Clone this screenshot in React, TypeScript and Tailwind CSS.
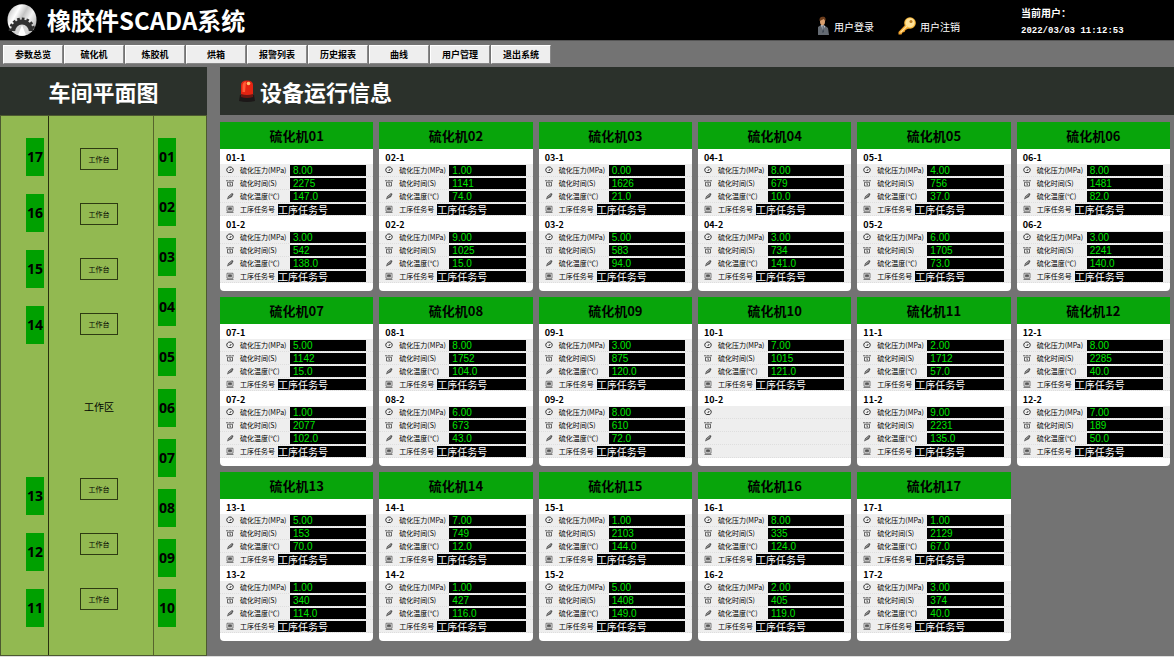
import type { ReactNode } from "react";

type Reading = [string, string, string] | null;

interface Machine {
  id: string;
  stations: [Reading, Reading];
}

const machines: Machine[] = [
  { id: "01", stations: [["8.00", "2275", "147.0"], ["3.00", "542", "138.0"]] },
  { id: "02", stations: [["1.00", "1141", "74.0"], ["9.00", "1025", "15.0"]] },
  { id: "03", stations: [["0.00", "1626", "21.0"], ["5.00", "583", "94.0"]] },
  { id: "04", stations: [["8.00", "679", "10.0"], ["3.00", "734", "141.0"]] },
  { id: "05", stations: [["4.00", "756", "37.0"], ["6.00", "1705", "73.0"]] },
  { id: "06", stations: [["8.00", "1481", "82.0"], ["3.00", "2241", "140.0"]] },
  { id: "07", stations: [["5.00", "1142", "15.0"], ["1.00", "2077", "102.0"]] },
  { id: "08", stations: [["8.00", "1752", "104.0"], ["6.00", "673", "43.0"]] },
  { id: "09", stations: [["3.00", "875", "120.0"], ["8.00", "610", "72.0"]] },
  { id: "10", stations: [["7.00", "1015", "121.0"], null] },
  { id: "11", stations: [["2.00", "1712", "57.0"], ["9.00", "2231", "135.0"]] },
  { id: "12", stations: [["8.00", "2285", "40.0"], ["7.00", "189", "50.0"]] },
  { id: "13", stations: [["5.00", "153", "70.0"], ["1.00", "340", "114.0"]] },
  { id: "14", stations: [["7.00", "749", "12.0"], ["1.00", "427", "116.0"]] },
  { id: "15", stations: [["1.00", "2103", "144.0"], ["5.00", "1408", "149.0"]] },
  { id: "16", stations: [["8.00", "335", "124.0"], ["2.00", "405", "119.0"]] },
  { id: "17", stations: [["1.00", "2129", "67.0"], ["3.00", "374", "40.0"]] },
];

const menu = ["参数总览", "硫化机", "炼胶机", "烘箱", "报警列表", "历史报表", "曲线", "用户管理", "退出系统"];

const GaugeIcon = () => (
  <svg viewBox="0 0 16 16" className="size-2" fill="none" stroke="#333" strokeWidth="2">
    <path d="M4.500 13A6.500 6 0 1 1 11.500 13z" />
    <path d="M7.500 10l3-4" />
  </svg>
);

const ClockIcon = () => (
  <svg viewBox="0 0 16 16" className="size-2" fill="none" stroke="#444" strokeWidth="1.6">
    <path d="M0 3.5h5M6 3.5h4M11 3.500h5M3 6.500h10V14H3zM8 8v3.500h2" />
  </svg>
);

const ThermoIcon = () => (
  <svg viewBox="0 0 16 16" className="size-2">
    <path d="M2 15l2-6 8-7 3 2-3 6-6 3z" fill="#555" />
    <path d="M5 11l7-6" stroke="#ddd" strokeWidth="1.2" />
  </svg>
);

const TaskIcon = () => (
  <svg viewBox="0 0 16 16" className="size-2" fill="none" stroke="#555" strokeWidth="1.5">
    <path d="M2 2.5h12v10H2zM1 15h14" />
    <path d="M5 5.500h6v4H5z" fill="#555" />
  </svg>
);

const LogoIcon = () => (
  <svg viewBox="0 0 30 32" className="h-8 w-[30px]" aria-hidden="true">
    <defs>
      <linearGradient id="disc" x1="0" y1="0" x2="1" y2="0.6">
        <stop offset="0" stopColor="#aaa" />
        <stop offset="0.35" stopColor="#fff" />
        <stop offset="0.55" stopColor="#c4c4c4" />
        <stop offset="0.75" stopColor="#f4f4f4" />
        <stop offset="1" stopColor="#bbb" />
      </linearGradient>
    </defs>
    <ellipse cx="15" cy="16" rx="14.5" ry="15.8" fill="url(#disc)" />
    <path d="M4 27a11 11.500 0 0 1 22 0z" fill="#303030" />
    <path
      d="M15 27m-11.800 0a11.800 12 0 0 1 23.600 0"
      fill="none"
      stroke="#303030"
      strokeWidth="3"
      strokeDasharray="2.600 2"
    />
    <path d="M8 28a7 7.500 0 0 1 14 0q-3 3.800-7 3.800T8 28z" fill="#d6d6d6" />
    <path d="M15 21l-4 10q4 1.500 8 0z" fill="#fff" />
  </svg>
);

const UserIcon = () => (
  <svg viewBox="0 0 14 20" className="h-5 w-3.5" aria-hidden="true">
    <path d="M2 19V11l3-2h3l4 3 1 7z" fill="#646a72" />
    <path d="M5 9l2 6 2-5z" fill="#cfd6de" />
    <path d="M6.6 10h1v6l-1 1z" fill="#26303d" />
    <ellipse cx="6.5" cy="5.500" rx="2.500" ry="3.800" fill="#d9a06f" />
    <path d="M3.500 5C3 1.500 5 .5 7 .8c2.500 0 3 2 2.500 4.500L8 3z" fill="#6d3d1c" />
  </svg>
);

const KeyIcon = () => (
  <svg viewBox="0 0 18 18" className="size-[18px]" aria-hidden="true">
    <path d="M8 7L.5 15v2.500h3l1-2 2-.5 1-2 4-2z" fill="#f2a32c" />
    <circle cx="12" cy="6" r="5.800" fill="#f9b93c" />
    <circle cx="12" cy="5.800" r="4.600" fill="#ffe39a" />
    <circle cx="13" cy="4.500" r="1.500" fill="#b87922" />
    <path d="M9 9l-6.500 6.500" stroke="#ffe39a" strokeWidth="1.2" />
  </svg>
);

const AlarmIcon = () => (
  <svg viewBox="0 0 18 24" className="h-6 w-[18px]" aria-hidden="true">
    <path d="M2 16h14l1 6q-8 2-16 0z" fill="#1c1818" />
    <path d="M3 16V6q0-4.500 6-4.500T15 6v10q-6 3-12 0z" fill="#e32412" />
    <path d="M3 15q6 2 12 0v3q-6 2-12 0z" fill="#6d1712" />
    <path d="M4.500 7q0-4 3.500-4.500L7 13H4.500z" fill="#ff5b35" />
    <circle cx="10.500" cy="4.500" r="1.800" fill="#ffc46e" />
  </svg>
);

const Row = ({ icon, children }: { icon: ReactNode; children?: ReactNode }) => (
  <div className="flex h-[13px] items-center border-b border-dotted border-[#dedede] pl-1.5 pr-[7px]">
    <span className="w-3.5 shrink-0">{icon}</span>
    {children}
  </div>
);

const Value = ({ label, value }: { label: string; value: string }) => (
  <>
    <dt className="w-[50px] shrink-0">{label}</dt>
    <dd className="h-[11px] flex-1 bg-black pl-[3px] font-['Liberation_Sans',sans-serif] text-[10px] leading-[11px] text-[#00e400]">
      {value}
    </dd>
  </>
);

const Station = ({ name, reading }: { name: string; reading: Reading }) => (
  <section>
    <h3 className="h-[15px] pl-1.5 text-[9px] leading-[17px] font-bold">{name}</h3>
    <dl className="bg-[#eee] text-[7px] leading-[12px] whitespace-nowrap">
      <Row icon={<GaugeIcon />}>{reading && <Value label="硫化压力(MPa)" value={reading[0]} />}</Row>
      <Row icon={<ClockIcon />}>{reading && <Value label="硫化时间(S)" value={reading[1]} />}</Row>
      <Row icon={<ThermoIcon />}>{reading && <Value label="硫化温度(℃)" value={reading[2]} />}</Row>
      <Row icon={<TaskIcon />}>
        {reading && (
          <>
            <dt className="w-[38px] shrink-0">工序任务号</dt>
            <dd className="h-[11px] flex-1 bg-black text-[10px] leading-[11px] text-white">工序任务号</dd>
          </>
        )}
      </Row>
    </dl>
  </section>
);

const MachineCard = ({ id, stations }: Machine) => (
  <article className="rounded-b-[4px] bg-white pb-2">
    <h2 className="h-[27px] bg-[#08a50b] text-center text-[13px] leading-[27px] font-bold">硫化机{id}</h2>
    <Station name={`${id}-1`} reading={stations[0]} />
    <Station name={`${id}-2`} reading={stations[1]} />
  </article>
);

const Slot = ({ id }: { id: string }) => (
  <div className="h-[38px] w-[18px] bg-[#00a000] text-center font-['Open_Sans','Noto_Sans',sans-serif] text-[14px] leading-[38px] font-bold">
    {id}
  </div>
);

const Bench = () => (
  <div className="h-[22px] w-[38px] border border-[#2d3a12] text-center text-[7px] leading-[20px]">工作台</div>
);

const FloorPlan = () => (
  <aside className="flex w-[207px] shrink-0 flex-col">
    <h2 className="h-12 bg-[#2b312b] text-center text-[22px] leading-[48px] font-bold text-white">车间平面图</h2>
    <div className="flex flex-1 border border-[#4c5930] bg-[#92b951]">
      <div className="flex w-12 flex-col items-end justify-between border-r border-[#28300f] pt-[22px] pr-1 pb-7">
        <div className="flex flex-col gap-[18px]">
          {["17", "16", "15", "14"].map((id) => <Slot key={id} id={id} />)}
        </div>
        <div className="flex flex-col gap-[18px]">
          {["13", "12", "11"].map((id) => <Slot key={id} id={id} />)}
        </div>
      </div>
      <div className="flex flex-1 flex-col items-center justify-between border-r border-[#56642c] pt-8 pr-1 pb-[45px]">
        <div className="flex flex-col gap-[33px]">
          <Bench />
          <Bench />
          <Bench />
          <Bench />
        </div>
        <p className="text-[10px] leading-4">工作区</p>
        <div className="flex flex-col gap-[33px]">
          <Bench />
          <Bench />
          <Bench />
        </div>
      </div>
      <div className="flex w-[52px] flex-col justify-between pt-[22px] pb-7 pl-1">
        {["01", "02", "03", "04", "05", "06", "07", "08", "09", "10"].map((id) => <Slot key={id} id={id} />)}
      </div>
    </div>
  </aside>
);

const Header = () => (
  <header className="flex h-10 items-center bg-black pl-[7px] text-white">
    <LogoIcon />
    <h1 className="ml-[10px] text-[24px] leading-10 font-bold">橡胶件SCADA系统</h1>
    <div className="ml-auto flex gap-6 pt-3 text-[10px]">
      <button type="button" className="flex items-center gap-1">
        <UserIcon />
        用户登录
      </button>
      <button type="button" className="flex items-center gap-1">
        <KeyIcon />
        用户注销
      </button>
    </div>
    <div className="ml-[61px] w-[153px] pt-1 leading-[18px] font-bold">
      <p className="text-[10px]">当前用户：</p>
      <p className="font-['Liberation_Mono',monospace] text-[9px]">2022/03/03 11:12:53</p>
    </div>
  </header>
);

const App = () => {
  return (
    <div className="flex min-h-screen flex-col border-b border-[#ddd] bg-[#737373] font-['Noto_Sans_CJK_SC',sans-serif] text-black">
      <Header />
      <nav className="flex h-[27px] items-center gap-px border-t border-[#555] pl-[3px]">
        {menu.map((item) => (
          <button
            key={item}
            type="button"
            className="h-[19px] w-[60px] border border-t-white border-r-[#888] border-b-[#888] border-l-white bg-[#eee] text-[9px] leading-[17px] font-bold"
          >
            {item}
          </button>
        ))}
      </nav>
      <div className="flex flex-1 gap-[13px]">
        <FloorPlan />
        <main className="flex-1">
          <div className="flex h-12 items-center gap-1 bg-[#2b312b] pl-[18px] text-white">
            <AlarmIcon />
            <h2 className="text-[22px] leading-[48px] font-bold">设备运行信息</h2>
          </div>
          <div className="grid grid-cols-6 gap-1.5 pt-[7px] pr-1 pb-3">
            {machines.map((m) => (
              <MachineCard key={m.id} {...m} />
            ))}
          </div>
        </main>
      </div>
    </div>
  );
};

export default App;
